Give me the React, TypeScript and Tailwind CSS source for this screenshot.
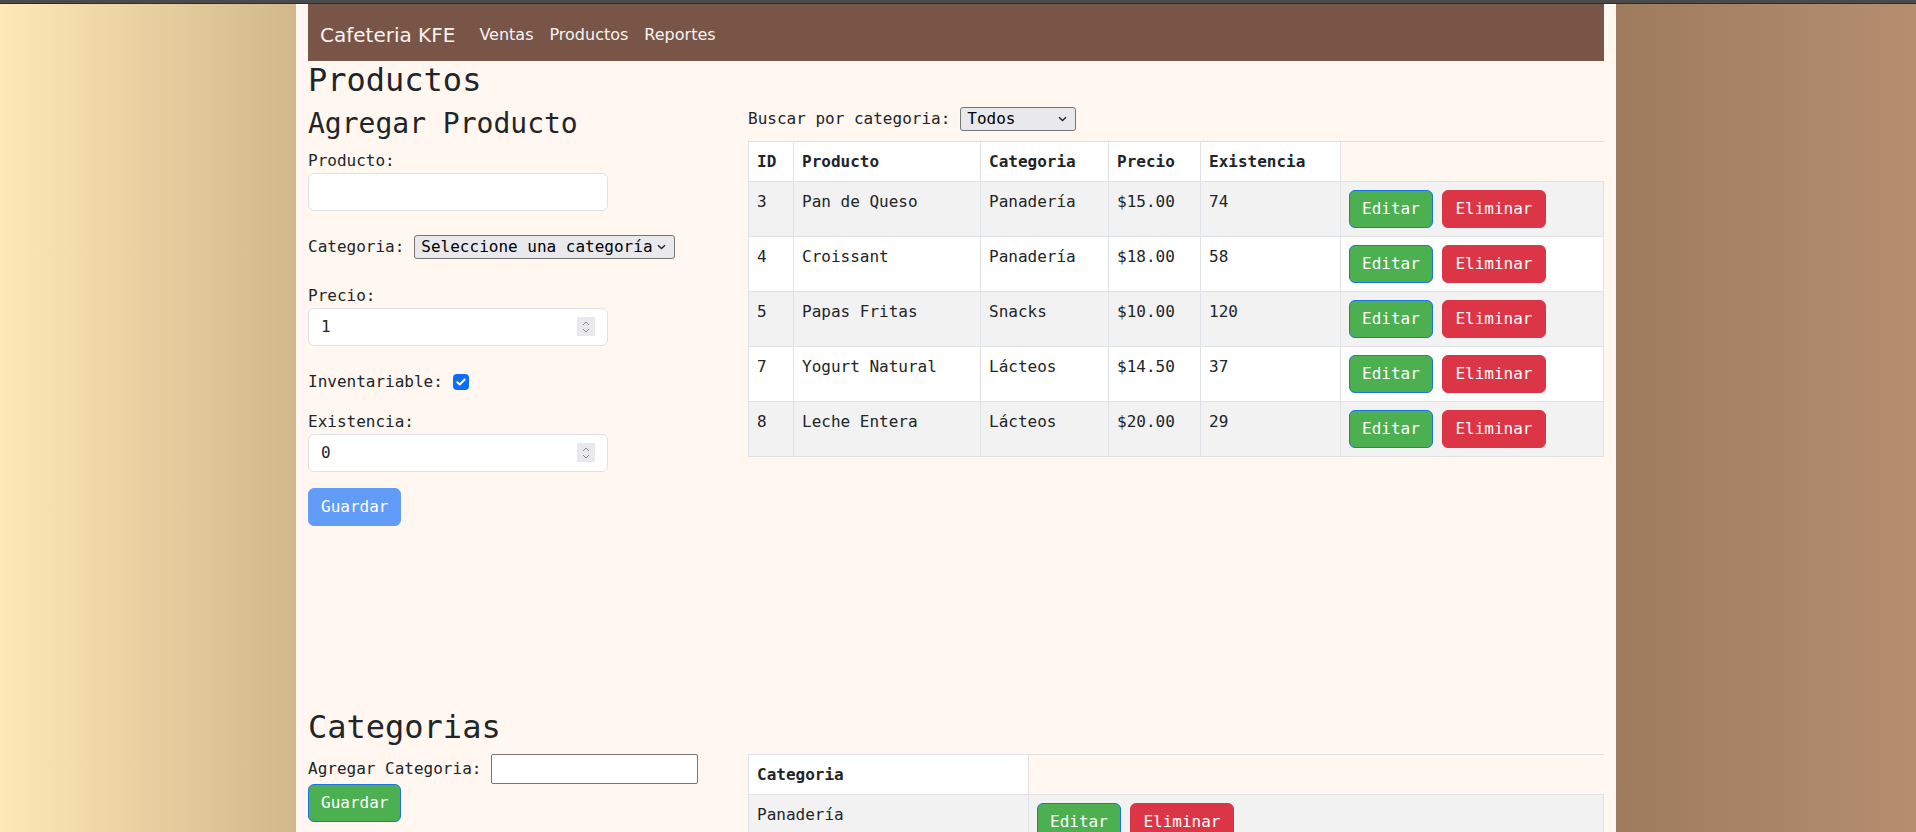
import React from 'react';

const products = [
    { id: 3, name: 'Pan de Queso', cat: 'Panadería', price: '$15.00', stock: 74 },
    { id: 4, name: 'Croissant', cat: 'Panadería', price: '$18.00', stock: 58 },
    { id: 5, name: 'Papas Fritas', cat: 'Snacks', price: '$10.00', stock: 120 },
    { id: 7, name: 'Yogurt Natural', cat: 'Lácteos', price: '$14.50', stock: 37 },
    { id: 8, name: 'Leche Entera', cat: 'Lácteos', price: '$20.00', stock: 29 },
];

const cell = 'border border-[#dee2e6] px-2 py-2 align-top text-left leading-6';
const headCell = 'border border-[#dee2e6] px-2 pt-2 pb-[7px] align-top text-left leading-6 bg-white font-bold';

const Chevron: React.FC = () => (
    <svg width="9" height="6" viewBox="0 0 9 6" className="pointer-events-none absolute right-[9px] top-1/2 -translate-y-1/2">
        <path d="M1 1.2 L4.5 4.6 L8 1.2" fill="none" stroke="#222" strokeWidth="1.4" />
    </svg>
);

const FakeSelect: React.FC<{ value: string; width: string }> = ({ value, width }) => (
    <div className={`relative ${width}`}>
        <select
            defaultValue={value}
            className="h-6 w-full appearance-none rounded-[3px] border border-[#767676] bg-[#e9e9ed] pl-[6px] pr-5 text-[16px] leading-[22px] text-black outline-none"
        >
            <option>{value}</option>
        </select>
        <Chevron />
    </div>
);

const Spinner: React.FC = () => (
    <span className="flex h-[19px] w-[18px] flex-col items-center justify-center gap-[2px] bg-[#e9e9ed]">
        <svg width="8" height="5" viewBox="0 0 8 5"><path d="M1 4 L4 1 L7 4" fill="none" stroke="#8a8a8a" strokeWidth="1" /></svg>
        <svg width="8" height="5" viewBox="0 0 8 5"><path d="M1 1 L4 4 L7 1" fill="none" stroke="#8a8a8a" strokeWidth="1" /></svg>
    </span>
);

const NumberField: React.FC<{ value: string }> = ({ value }) => (
    <div className="flex h-[38px] w-[300px] items-center rounded-md border border-[#dee2e6] bg-white pl-3 pr-3">
        <input readOnly defaultValue={value} className="min-w-0 flex-1 leading-6 text-[#212529] outline-none" />
        <Spinner />
    </div>
);

const Btn: React.FC<{ kind: 'edit' | 'delete' | 'save'; children: React.ReactNode }> = ({ kind, children }) => {
    const colors =
        kind === 'delete'
            ? 'bg-[#dc3545] border-[#dc3545]'
            : 'bg-[#4caf50] border-[#1a73e8]';
    return (
        <button className={`inline-block rounded-md border px-3 py-[6px] align-top leading-6 text-white ${colors}`}>
            {children}
        </button>
    );
};

export default function App() {
    return (
        <div className="flex min-h-screen flex-col font-['DejaVu_Sans_Mono',monospace] text-[16px] text-[#212529]">
            <div className="h-[4px] border-b border-[#2e2e2e] bg-[#4a4a4a]" />
            <div className="flex flex-1">
                <div className="w-[296px] bg-gradient-to-r from-[#ffe8b8] to-[#d0b88a]" />

                <div className="w-[1320px] bg-[#fff7f0] px-3 pb-10">
                    <nav className="flex h-[57px] items-center bg-[#795548] px-3 pt-[4px] font-['DejaVu_Sans',sans-serif] text-[#f8f3f1]">
                        <span className="mr-4 text-[20px] leading-[30px]">Cafeteria KFE</span>
                        <span className="px-2 leading-6">Ventas</span>
                        <span className="px-2 leading-6">Productos</span>
                        <span className="px-2 leading-6">Reportes</span>
                    </nav>

                    <h2 className="mb-2 text-[32px] leading-[1.2] font-normal">Productos</h2>

                    <div className="flex gap-6">
                        <div className="w-[416px] shrink-0">
                            <h3 className="mb-2 text-[28px] leading-[1.2] font-normal">Agregar Producto</h3>
                            <label className="block leading-6">Producto:</label>
                            <input className="block h-[38px] w-[300px] rounded-md border border-[#dee2e6] bg-white px-3 outline-none" />

                            <div className="mt-6 flex h-6 items-center gap-[10px]">
                                <span className="leading-6">Categoria:</span>
                                <FakeSelect value="Seleccione una categoría" width="w-[261px]" />
                            </div>

                            <label className="mt-[25px] block leading-6">Precio:</label>
                            <NumberField value="1" />

                            <div className="mt-6 flex h-6 items-center gap-[10px]">
                                <span className="leading-6">Inventariable:</span>
                                <span className="flex h-4 w-4 items-center justify-center rounded-[4px] bg-[#0d6efd]">
                                    <svg width="10" height="8" viewBox="0 0 10 8">
                                        <path d="M1.3 4.2 L3.8 6.5 L8.7 1.5" fill="none" stroke="#fff" strokeWidth="1.9" strokeLinecap="round" strokeLinejoin="round" />
                                    </svg>
                                </span>
                            </div>

                            <label className="mt-4 block leading-6">Existencia:</label>
                            <NumberField value="0" />

                            <button className="mt-4 rounded-md border border-[#0d6efd] bg-[#0d6efd] px-3 py-[6px] leading-6 text-white opacity-65">
                                Guardar
                            </button>
                        </div>

                        <div className="flex-1">
                            <div className="flex h-6 items-center gap-[10px]">
                                <span className="leading-6">Buscar por categoria:</span>
                                <FakeSelect value="Todos" width="w-[116px]" />
                            </div>
                            <table className="mt-[10px] w-full table-fixed border-collapse border-t border-[#dee2e6]">
                                <thead>
                                    <tr>
                                        <th className={`${headCell} w-[45px]`}>ID</th>
                                        <th className={`${headCell} w-[187px]`}>Producto</th>
                                        <th className={`${headCell} w-[128px]`}>Categoria</th>
                                        <th className={`${headCell} w-[92px]`}>Precio</th>
                                        <th className={`${headCell} w-[140px]`}>Existencia</th>
                                        <th className="border-t border-[#dee2e6]" />
                                    </tr>
                                </thead>
                                <tbody>
                                    {products.map((p, i) => (
                                        <tr key={p.id} className={i % 2 === 0 ? 'bg-[#f2f2f2]' : 'bg-white'}>
                                            <td className={cell}>{p.id}</td>
                                            <td className={cell}>{p.name}</td>
                                            <td className={cell}>{p.cat}</td>
                                            <td className={cell}>{p.price}</td>
                                            <td className={cell}>{p.stock}</td>
                                            <td className={`${cell} whitespace-nowrap`}>
                                                <Btn kind="edit">Editar</Btn> <Btn kind="delete">Eliminar</Btn>
                                            </td>
                                        </tr>
                                    ))}
                                </tbody>
                            </table>
                        </div>
                    </div>

                    <h2 className="mt-[182px] mb-2 text-[32px] leading-[1.2] font-normal">Categorias</h2>

                    <div className="flex gap-6">
                        <div className="w-[416px] shrink-0">
                            <div className="flex h-[30px] items-center gap-[10px]">
                                <span className="leading-6">Agregar Categoria:</span>
                                <input className="h-[30px] w-[207px] rounded-[2px] border border-[#767676] bg-white px-1 outline-none" />
                            </div>
                            <Btn kind="save">Guardar</Btn>
                        </div>
                        <div className="flex-1">
                            <table className="w-full table-fixed border-collapse border-t border-[#dee2e6]">
                                <thead>
                                    <tr>
                                        <th className={`${headCell} w-[280px]`}>Categoria</th>
                                        <th className="border-t border-[#dee2e6]" />
                                    </tr>
                                </thead>
                                <tbody>
                                    {['Panadería', 'Snacks', 'Lácteos'].map((c, i) => (
                                        <tr key={c} className={i % 2 === 0 ? 'bg-[#f2f2f2]' : 'bg-white'}>
                                            <td className={cell}>{c}</td>
                                            <td className={`${cell} whitespace-nowrap`}>
                                                <Btn kind="edit">Editar</Btn> <Btn kind="delete">Eliminar</Btn>
                                            </td>
                                        </tr>
                                    ))}
                                </tbody>
                            </table>
                        </div>
                    </div>
                </div>

                <div className="flex-1 bg-gradient-to-r from-[#9f7b5e] to-[#b58e70]" />
            </div>
        </div>
    );
}
